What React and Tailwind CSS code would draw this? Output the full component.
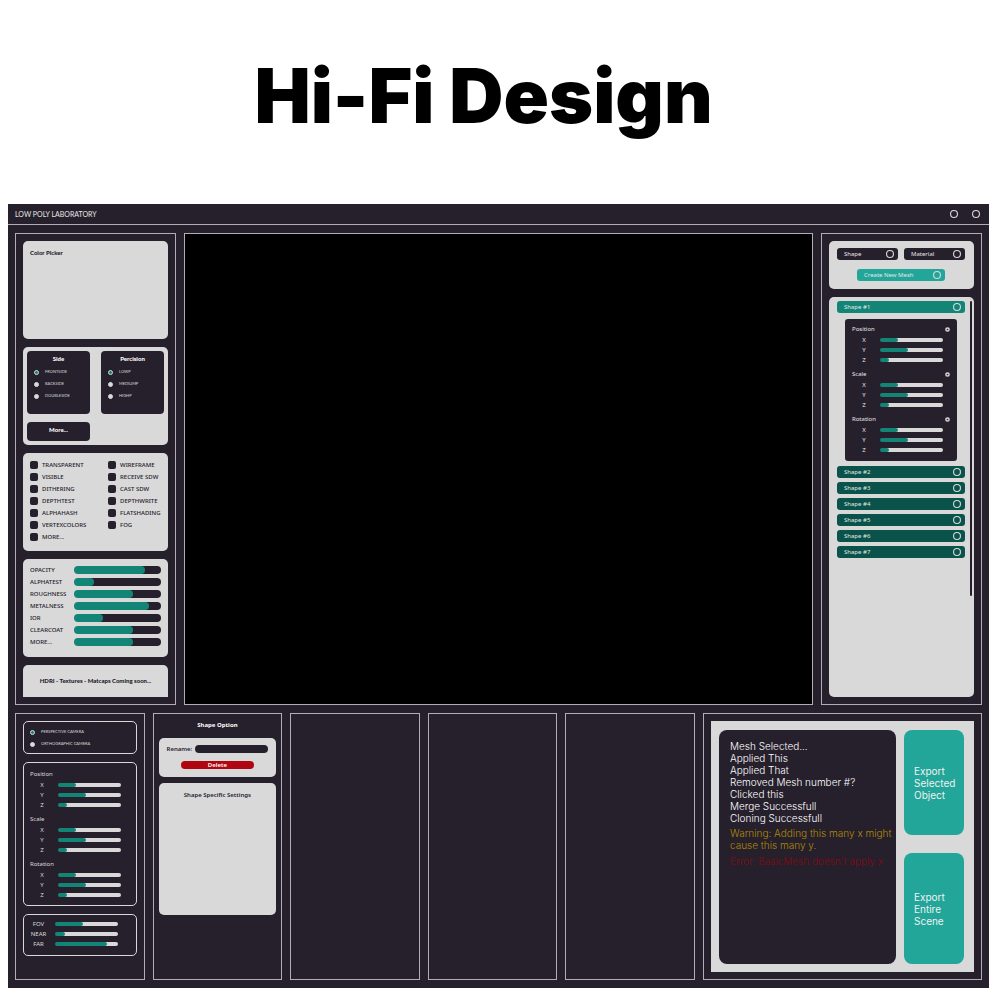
import React from "react";

const sans = "font-['Noto_Sans',sans-serif]";

function Panel({ className = "", children, label }) {
  return (
    <section aria-label={label} className={`border border-[#b0aeb2] ${className}`}>
      {children}
    </section>
  );
}

function Card({ className = "", children }) {
  return <div className={`rounded-[5px] bg-[#d9d9d9] text-[#26202c] ${className}`}>{children}</div>;
}

function Ring({ className = "size-2" }) {
  return (
    <svg viewBox="0 0 10 10" className={`shrink-0 ${className}`} fill="none" stroke="#d9d9d9" aria-hidden="true">
      <circle cx="5" cy="5" r="4.3" strokeWidth="1.4" />
    </svg>
  );
}

function MiniRing() {
  return (
    <svg viewBox="0 0 10 10" className="size-[5px]" fill="none" stroke="#d9d9d9" aria-hidden="true">
      <circle cx="5" cy="5" r="3.2" strokeWidth="3" />
    </svg>
  );
}

function Slider({ label, value, big }) {
  const thumb = big ? 8 : 4;
  const stop = `calc(${thumb / 2}px + (100% - ${thumb}px) * ${value / 100})`;
  const rest = big ? "#26202c" : "#d9d9d9";
  return (
    <input
      type="range"
      aria-label={label}
      defaultValue={value}
      style={{ backgroundImage: `linear-gradient(to right, #128577 ${stop}, ${rest} ${stop})` }}
      className={
        big
          ? "block h-2 min-w-0 flex-1 appearance-none rounded-full [&::-webkit-slider-thumb]:size-2 [&::-webkit-slider-thumb]:appearance-none [&::-webkit-slider-thumb]:rounded-full [&::-webkit-slider-thumb]:bg-[#128577]"
          : "block h-1 w-[63px] appearance-none rounded-full [&::-webkit-slider-thumb]:size-1 [&::-webkit-slider-thumb]:appearance-none [&::-webkit-slider-thumb]:rounded-full [&::-webkit-slider-thumb]:bg-[#128577]"
      }
    />
  );
}

function Radio({ name, label, checked }) {
  return (
    <label className="flex h-3 items-center gap-[6px] font-['Lato',sans-serif] text-[4px] leading-3 whitespace-nowrap text-[#d9d9d9]">
      <input
        type="radio"
        name={name}
        defaultChecked={checked}
        className="size-[5px] appearance-none rounded-full border border-[#d9d9d9] bg-[#d9d9d9] checked:bg-[#128577]"
      />
      {label}
    </label>
  );
}

function RadioBox({ title, options }) {
  return (
    <fieldset className="min-h-[63px] w-[63px] rounded-sm bg-[#26202c] px-[7px] pt-[3px]">
      <legend className="float-left w-full text-center font-['Lato',sans-serif] text-[6px] leading-[10px] font-black text-white">
        {title}
      </legend>
      <div className="clear-both pt-[2px]">
        {options.map((o, i) => (
          <Radio key={o} name={title} label={o} checked={i === 0} />
        ))}
      </div>
    </fieldset>
  );
}

function Transform({ rings }) {
  return (
    <div className="flex flex-col gap-1">
      {["Position", "Scale", "Rotation"].map((name) => (
        <div key={name}>
          <div className="flex h-[11px] items-center justify-between text-[6px] leading-[11px]">
            <span>{name}</span>
            {rings && (
              <button aria-label={`Reset ${name}`} className="block">
                <MiniRing />
              </button>
            )}
          </div>
          {[
            ["X", 23],
            ["Y", 41],
            ["Z", 8],
          ].map(([axis, v]) => (
            <div key={axis} className="flex h-[10px] items-center text-[6px] leading-[10px]">
              <span className="w-7 pr-1 text-center">{axis}</span>
              <Slider label={`${name} ${axis}`} value={v} />
            </div>
          ))}
        </div>
      ))}
    </div>
  );
}

function PillButton({ className = "", children }) {
  return (
    <button
      className={`flex h-3 items-center justify-between rounded-[3px] pr-1 pl-[7px] text-[6px] leading-3 text-[#e6e6e6] ${className}`}
    >
      {children}
      <Ring />
    </button>
  );
}

const checks = [
  ["TRANSPARENT", "VISIBLE", "DITHERING", "DEPTHTEST", "ALPHAHASH", "VERTEXCOLORS", "MORE..."],
  ["WIREFRAME", "RECEIVE SDW", "CAST SDW", "DEPTHWRITE", "FLATSHADING", "FOG"],
];

const sliders = [
  ["OPACITY", 80],
  ["ALPHATEST", 15],
  ["ROUGHNESS", 64],
  ["METALNESS", 85],
  ["IOR", 26],
  ["CLEARCOAT", 64],
  ["MORE...", 64],
];

function MaterialPanel() {
  return (
    <Panel label="Material" className="flex w-[161px] shrink-0 flex-col gap-2 p-[7px]">
      <Card className="min-h-[98px] px-[7px] pt-[7px]">
        <h2 className="font-['Lato',sans-serif] text-[6px] leading-[10px] font-black">Color Picker</h2>
      </Card>
      <Card className="min-h-[98px] p-1">
        <div className="flex justify-between">
          <RadioBox title="Side" options={["FRONTSIDE", "BACKSIDE", "DOUBLESIDE"]} />
          <RadioBox title="Percision" options={["LOWP", "MEDIUMP", "HIGHP"]} />
        </div>
        <button className="mt-2 block h-[19px] w-[63px] rounded-sm bg-[#26202c] pb-1 text-center font-['Lato',sans-serif] text-[6px] leading-4 font-black text-white">
          More...
        </button>
      </Card>
      <Card className="grid min-h-[98px] grid-cols-[78px_1fr] px-[7px] pt-[6px]">
        {checks.map((col, i) => (
          <div key={i}>
            {col.map((c) => (
              <label key={c} className="flex h-3 items-center gap-1 text-[6px] leading-3 font-medium whitespace-nowrap">
                <input
                  type="checkbox"
                  className="size-2 appearance-none rounded-[2px] bg-[#26202c] checked:bg-[#128577]"
                />
                {c}
              </label>
            ))}
          </div>
        ))}
      </Card>
      <Card className="min-h-[98px] px-[7px] pt-[5px]">
        {sliders.map(([name, v]) => (
          <div key={name} className="flex h-3 items-center text-[6px] leading-3 font-medium">
            <span className="w-11">{name}</span>
            <Slider big label={name} value={v} />
          </div>
        ))}
      </Card>
      <Card className="flex min-h-8 items-center justify-center rounded-b-none font-['Lato',sans-serif] text-[6px] leading-3 font-black whitespace-nowrap">
        HDRI - Textures - Matcaps Coming soon...
      </Card>
    </Panel>
  );
}

function MeshPanel() {
  return (
    <Panel label="Meshes" className="flex w-[161px] shrink-0 flex-col gap-2 p-[7px]">
      <Card className="min-h-12 pt-[7px] pr-[9px] pl-2">
        <div className="grid grid-cols-2 gap-[6px]">
          <PillButton className="bg-[#26202c]">Shape</PillButton>
          <PillButton className="bg-[#26202c]">Material</PillButton>
        </div>
        <PillButton className="mx-auto mt-[9px] w-[88px] bg-[#22a699]">Create New Mesh</PillButton>
      </Card>
      <Card className="flex flex-1 justify-between pt-1 pr-[2px] pl-2">
        <div className="flex w-32 flex-col gap-1">
          <PillButton className="bg-[#128577]">Shape #1</PillButton>
          <div className="mx-2 mt-[2px] mb-px rounded-[3px] bg-[#26202c] px-[7px] pt-[5px] pb-[6px] text-[#e6e6e6]">
            <Transform rings />
          </div>
          {[2, 3, 4, 5, 6, 7].map((n) => (
            <PillButton key={n} className="bg-[#09534b]">
              Shape #{n}
            </PillButton>
          ))}
        </div>
        <div className="h-[295px] w-[2px] rounded-full bg-[#26202c]" />
      </Card>
    </Panel>
  );
}

function CameraPanel() {
  return (
    <Panel label="Camera" className="flex flex-col gap-2 p-[7px] text-[#d9d9d9]">
      <div className="rounded-[5px] border border-[#d9d9d9] px-[6px] pt-[4px] pb-[3px]">
        <Radio name="camera" label="PERSPECTIVE CAMERA" checked />
        <Radio name="camera" label="ORTHOGRAPHIC CAMERA" />
      </div>
      <div className="rounded-[5px] border border-[#d9d9d9] px-[6px] pt-[6px] pb-[5px]">
        <Transform />
      </div>
      <div className="rounded-[5px] border border-[#d9d9d9] px-[6px] pt-1 pb-[6px]">
        {[
          ["FOV", 41],
          ["NEAR", 10],
          ["FAR", 82],
        ].map(([name, v]) => (
          <div key={name} className="flex h-[10px] items-center text-[6px] leading-[10px]">
            <span className="w-[25px] pr-2 text-center">{name}</span>
            <Slider label={name} value={v} />
          </div>
        ))}
      </div>
    </Panel>
  );
}

function ShapePanel() {
  return (
    <Panel label="Shape option" className="px-[5px] pt-[6px]">
      <h2 className="text-center text-[6px] leading-[11px] font-bold text-white">Shape Option</h2>
      <Card className="mt-[7px] min-h-[39px] px-2 pt-[6px]">
        <label className="flex items-center justify-between text-[6px] leading-[10px] font-semibold">
          Rename:
          <input
            type="text"
            className="h-2 w-[73px] rounded-full bg-[#26202c] px-1 text-[6px] text-white outline-none"
          />
        </label>
        <button className="mx-auto mt-[7px] block h-2 w-[73px] rounded-full bg-[#b0060f] text-center text-[6px] leading-2 font-semibold text-white">
          Delete
        </button>
      </Card>
      <Card className="mt-[6px] min-h-[132px] pt-[7px]">
        <h3 className="text-center text-[6px] leading-[10px] font-semibold">Shape Specific Settings</h3>
      </Card>
    </Panel>
  );
}

function ExportPanel() {
  const button =
    "rounded-lg bg-[#22a699] px-[10px] text-left text-[10px] leading-3 text-[#f0f0f0]";
  return (
    <Panel label="Export" className="p-[7px] font-['Inter',sans-serif]">
      <div className="flex h-full gap-2 bg-[#d9d9d9] pt-[9px] pr-[10px] pb-2 pl-2">
        <div className="min-h-[234px] flex-1 rounded-lg bg-[#26202c] pt-[10px] pl-[11px] text-[10px] leading-3 font-light text-white">
          <p>Mesh Selected...</p>
          <p>Applied This</p>
          <p>Applied That</p>
          <p>Removed Mesh number #?</p>
          <p>Clicked this</p>
          <p>Merge Successfull</p>
          <p>Cloning Successfull</p>
          <p className="mt-[3px] text-[#b08a06]">
            Warning: Adding this many x might
            <br />
            cause this many y.
          </p>
          <p className="mt-1 text-[#850911]">Error: BasicMesh doesn't apply x</p>
        </div>
        <div className="flex w-[60px] flex-col gap-[18px]">
          <button className={`min-h-[105px] ${button}`}>Export Selected Object</button>
          <button className={`flex-1 ${button}`}>
            Export
            <br />
            Entire
            <br />
            Scene
          </button>
        </div>
      </div>
    </Panel>
  );
}

export default function App() {
  return (
    <div className={`min-h-screen bg-white pr-[11px] pl-2 ${sans}`}>
      <h1 className="pt-[51px] pr-[30px] text-center font-['Inter',sans-serif] text-[75px] leading-[90px] font-black text-black">
        Hi-Fi Design
      </h1>
      <div className="mt-[63px] bg-[#26202c] pb-2">
        <header className="flex h-[21px] items-center justify-between border-b border-[#b0aeb2] pr-[9px] pl-[7px] text-[#e6e6e6]">
          <span className="font-['Lato',sans-serif] text-[7px] leading-5">LOW POLY LABORATORY</span>
          <div className="flex gap-[14px]">
            <button aria-label="Minimize">
              <Ring />
            </button>
            <button aria-label="Close">
              <Ring />
            </button>
          </div>
        </header>
        <main className="flex flex-col gap-2 px-[7px] pt-2">
          <div className="flex gap-2">
            <MaterialPanel />
            <Panel label="Viewport" className="min-w-0 flex-1 bg-black" />
            <MeshPanel />
          </div>
          <div className="grid grid-cols-[repeat(5,minmax(0,1fr))_279px] gap-2">
            <CameraPanel />
            <ShapePanel />
            <Panel label="Empty slot 1" />
            <Panel label="Empty slot 2" />
            <Panel label="Empty slot 3" />
            <ExportPanel />
          </div>
        </main>
      </div>
    </div>
  );
}
